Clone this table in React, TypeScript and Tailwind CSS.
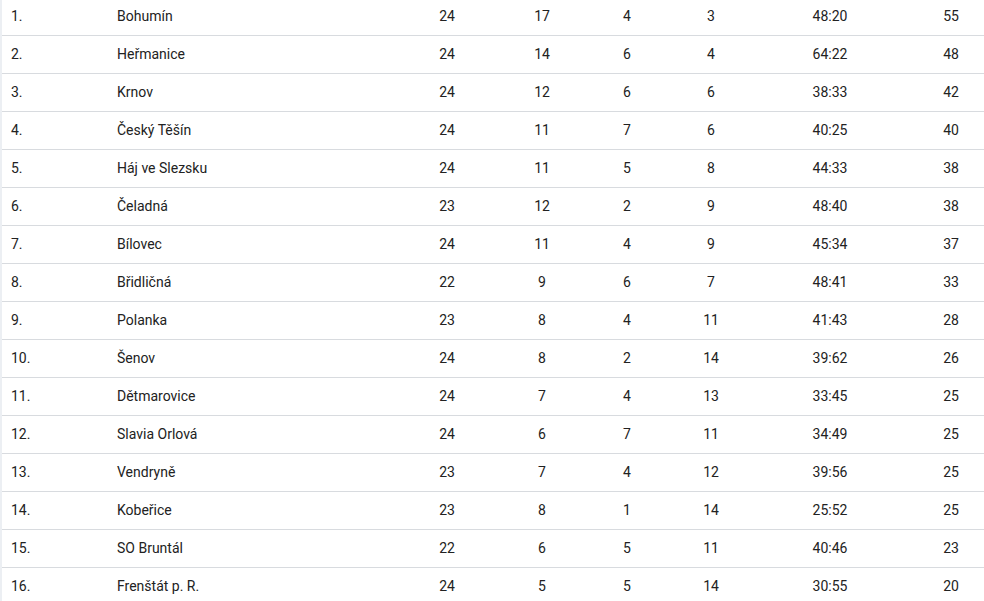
import React from "react";

const rows: [string, string, number, number, number, number, string, number][] = [
  ["1.", "Bohumín", 24, 17, 4, 3, "48:20", 55],
  ["2.", "Heřmanice", 24, 14, 6, 4, "64:22", 48],
  ["3.", "Krnov", 24, 12, 6, 6, "38:33", 42],
  ["4.", "Český Těšín", 24, 11, 7, 6, "40:25", 40],
  ["5.", "Háj ve Slezsku", 24, 11, 5, 8, "44:33", 38],
  ["6.", "Čeladná", 23, 12, 2, 9, "48:40", 38],
  ["7.", "Bílovec", 24, 11, 4, 9, "45:34", 37],
  ["8.", "Břidličná", 22, 9, 6, 7, "48:41", 33],
  ["9.", "Polanka", 23, 8, 4, 11, "41:43", 28],
  ["10.", "Šenov", 24, 8, 2, 14, "39:62", 26],
  ["11.", "Dětmarovice", 24, 7, 4, 13, "33:45", 25],
  ["12.", "Slavia Orlová", 24, 6, 7, 11, "34:49", 25],
  ["13.", "Vendryně", 23, 7, 4, 12, "39:56", 25],
  ["14.", "Kobeřice", 23, 8, 1, 14, "25:52", 25],
  ["15.", "SO Bruntál", 22, 6, 5, 11, "40:46", 23],
  ["16.", "Frenštát p. R.", 24, 5, 5, 14, "30:55", 20],
];

export default function App() {
  return (
    <div
      className="h-[601px] w-[984px] overflow-hidden bg-white text-[14px] text-[#222222]"
      style={{ fontFamily: "Roboto, 'Liberation Sans', sans-serif" }}
    >
      <div className="flex h-full">
        <div className="w-[2px] shrink-0 bg-[#eceff3]" />
        <div className="-mt-[2px] flex-1">
          {rows.map((r) => (
            <div
              key={r[0]}
              className="grid h-[38px] grid-cols-[105px_277px_126px_64px_106px_62px_176px_66px] items-center border-b border-[#d8dbdf]"
            >
              <div className="pl-[9px]">{r[0]}</div>
              <div className="pl-[10px]">{r[1]}</div>
              <div className="text-center">{r[2]}</div>
              <div className="text-center">{r[3]}</div>
              <div className="text-center">{r[4]}</div>
              <div className="text-center">{r[5]}</div>
              <div className="text-center">{r[6]}</div>
              <div className="text-center">{r[7]}</div>
            </div>
          ))}
        </div>
      </div>
    </div>
  );
}
